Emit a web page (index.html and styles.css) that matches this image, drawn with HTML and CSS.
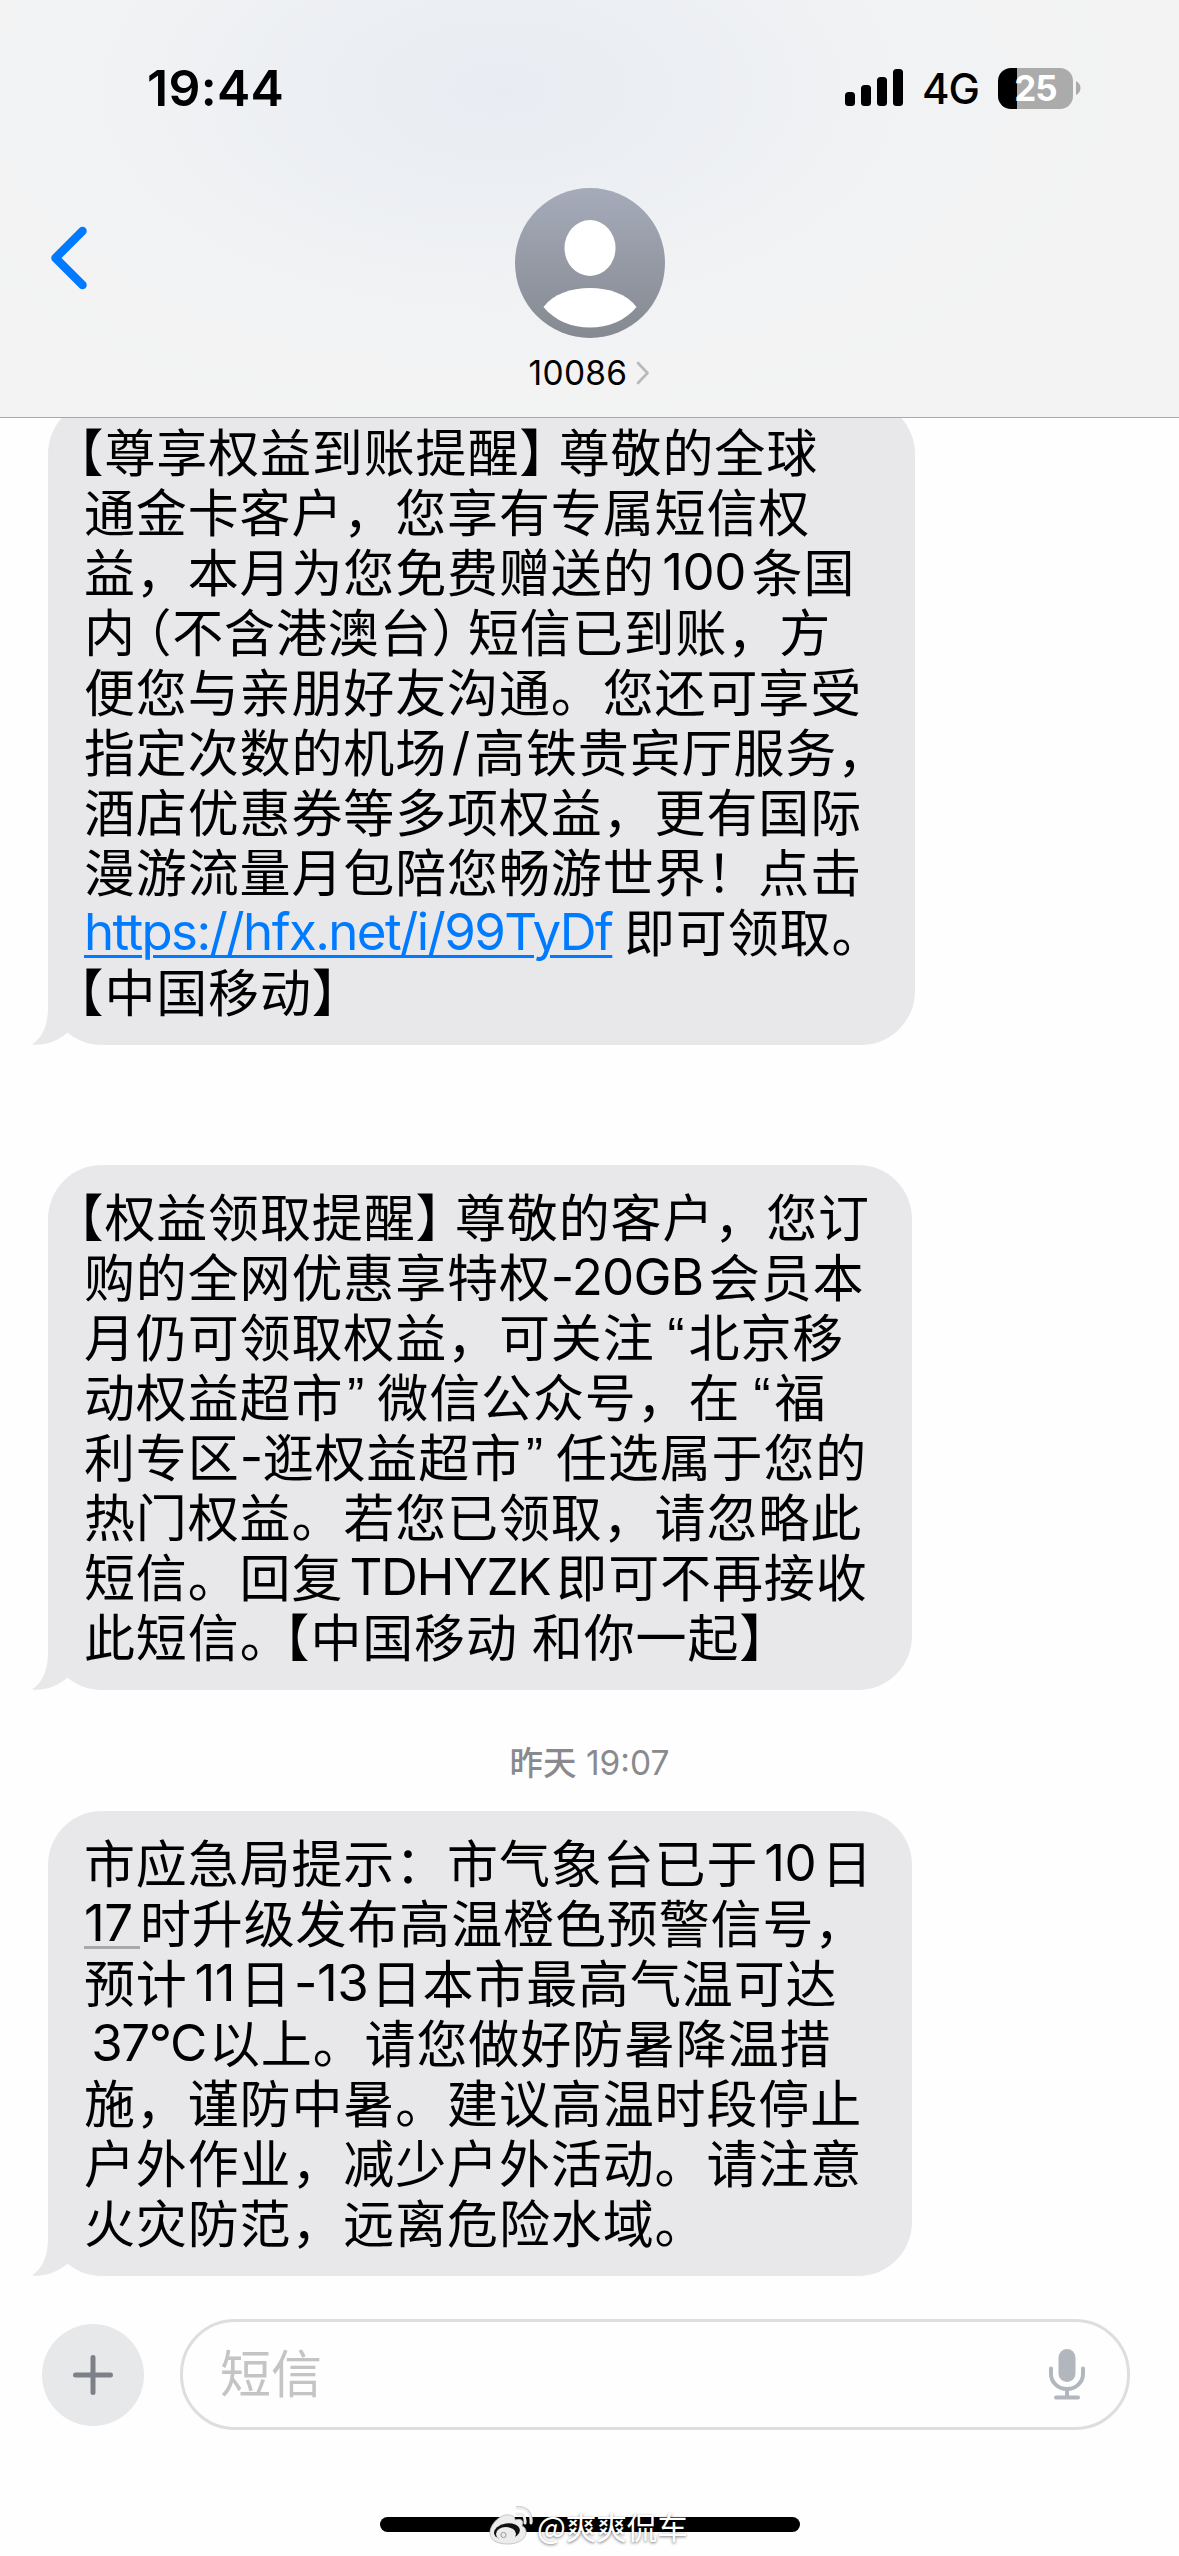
FILE: index.html
```
<!DOCTYPE html>
<html lang="zh-CN">
<head>
<meta charset="utf-8">
<title>10086</title>
<link rel="stylesheet" href="styles.css">
</head>
<body>
<div class="phone">
  <header class="header">
    <div class="status">
      <span class="time">19:44</span>
      <div class="status-right">
        <svg class="signal" width="58" height="38" viewBox="0 0 58 38"><rect x="0" y="23" width="10" height="14" rx="3.5"/><rect x="16" y="16" width="10" height="21" rx="3.5"/><rect x="32" y="8" width="10" height="29" rx="3.5"/><rect x="48" y="0" width="10" height="37" rx="3.5"/></svg>
        <span class="network">4G</span>
        <div class="battery"><span class="battery-body">25</span><svg width="5" height="14" viewBox="0 0 5 14"><path d="M0 0Q4.500 2.500 4.500 7T0 14z" fill="#ababab"/></svg></div>
      </div>
    </div>
    <div class="contact-bar">
      <svg class="back" width="38" height="64" viewBox="0 0 38 64"><path d="M33.500 5 6.500 32 33.500 59" fill="none" stroke="#007aff" stroke-width="8.500" stroke-linecap="round" stroke-linejoin="round"/></svg>
      <div class="contact">
        <svg class="avatar" width="150" height="150" viewBox="0 0 150 150">
          <defs><linearGradient id="av" x1="0" y1="0" x2="0" y2="1"><stop offset="0" stop-color="#a5abb9"/><stop offset="1" stop-color="#858991"/></linearGradient></defs>
          <circle cx="75" cy="75" r="75" fill="url(#av)"/>
          <ellipse cx="75" cy="60" rx="25.500" ry="28" fill="#fff"/>
          <path d="M28.500 119C38 106 56 100 75 100s37 6 46.500 19C110 133 93 139.500 75 139.500S40 133 28.500 119z" fill="#fff"/>
        </svg>
        <div class="name"><span>10086</span><svg width="14" height="24" viewBox="0 0 14 24"><path d="M2 2l9.500 10L2 22" fill="none" stroke="#b9b9bb" stroke-width="2.600" stroke-linecap="round" stroke-linejoin="round"/></svg></div>
      </div>
    </div>
  </header>

  <main class="thread">
    <section class="bubble first">
      <p><span class="open">【</span>尊享权益到账提醒<span class="close">】</span>尊敬的全球</p>
      <p>通金卡客户，您享有专属短信权</p>
      <p>益，本月为您免费赠送的<span class="run w100">100</span>条国</p>
      <p>内<span class="paren-open">（</span>不含港澳台<span class="paren-close">）</span>短信已到账，方</p>
      <p>便您与亲朋好友沟通。您还可享受</p>
      <p>指定次数的机场<span class="run slash">/</span>高铁贵宾厅服务，</p>
      <p>酒店优惠券等多项权益，更有国际</p>
      <p>漫游流量月包陪您畅游世界！点击</p>
      <p><a class="run link">https://hfx.net/i/99TyDf</a>即可领取。</p>
      <p><span class="open">【</span>中国移动<span class="close">】</span></p>
      <svg class="tail" width="60" height="60" viewBox="0 0 60 60"><path d="M16 0V22C16 40 11 52 0 59.500 14 61 27 55 35 48L60 30V0z"/></svg>
    </section>

    <section class="bubble second">
      <p><span class="open">【</span>权益领取提醒<span class="close">】</span>尊敬的客户，您订</p>
      <p>购的全网优惠享特权<span class="run plan">-20GB</span>会员本</p>
      <p>月仍可领取权益，可关注<span class="run quote-open">“</span>北京移</p>
      <p>动权益超市<span class="run quote-close">”</span>微信公众号，在<span class="run quote-open">“</span>福</p>
      <p>利专区<span class="run dash">-</span>逛权益超市<span class="run quote-close">”</span>任选属于您的</p>
      <p>热门权益。若您已领取，请忽略此</p>
      <p>短信。回复<span class="run code">TDHYZK</span>即可不再接收</p>
      <p>此短信<span class="stop">。</span><span class="open">【</span>中国移动<span class="gap"> </span>和你一起<span class="close">】</span></p>
      <svg class="tail" width="60" height="60" viewBox="0 0 60 60"><path d="M16 0V22C16 40 11 52 0 59.500 14 61 27 55 35 48L60 30V0z"/></svg>
    </section>

    <div class="stamp"><b>昨天</b> 19:07</div>

    <section class="bubble">
      <p>市应急局提示：市气象台已于<span class="run ten">10</span>日</p>
      <p><span class="run hour">17</span>时升级发布高温橙色预警信号，</p>
      <p>预计<span class="run eleven">11</span>日<span class="run thirteen">-13</span>日本市最高气温可达</p>
      <p><span class="run temp">37°C</span>以上。请您做好防暑降温措</p>
      <p>施，谨防中暑。建议高温时段停止</p>
      <p>户外作业，减少户外活动。请注意</p>
      <p>火灾防范，远离危险水域。</p>
      <svg class="tail" width="60" height="60" viewBox="0 0 60 60"><path d="M16 0V22C16 40 11 52 0 59.500 14 61 27 55 35 48L60 30V0z"/></svg>
    </section>
  </main>

  <footer class="composer">
    <div class="plus"><svg width="40" height="40" viewBox="0 0 40 40"><path d="M20 2.500v35M2.500 20h35" stroke="#7e8088" stroke-width="5" stroke-linecap="round"/></svg></div>
    <div class="field"><span>短信</span>
      <svg width="36" height="51" viewBox="0 0 36 51"><rect x="9.500" y="0" width="17" height="33" rx="8.500" fill="#b2b7be"/><path d="M2 19.500v5.500a16 15 0 0 0 32 0v-5.500M18 40v7M7 48.500h22" fill="none" stroke="#b2b7be" stroke-width="4" stroke-linecap="round"/></svg>
    </div>
  </footer>
  <div class="home"></div>
  <div class="watermark">
    <svg width="44" height="40" viewBox="0 0 44 40"><path d="M20 9C13 7 0 18 1 28c1 8 10 10 18 10 11 0 19-6 18-13-.5-4-4-5-4-5 2-5 0-8-7-6 0-3-1-4-6-5z" fill="#ececec" stroke="#bbb" stroke-width=".8"/><ellipse cx="18" cy="25.500" rx="13" ry="8" fill="#111" transform="rotate(-8 18 26)"/><ellipse cx="17" cy="28" rx="10" ry="7" fill="#ececec"/><circle cx="14.500" cy="29" r="2.600" fill="none" stroke="#999" stroke-width="1"/><path d="M28 8q9-1 8 9M28 2q15-1 14 15" fill="none" stroke="#ececec" stroke-width="3" stroke-linecap="round"/><path d="M27 .5Q43-1 43.500 16" fill="none" stroke="#bbb" stroke-width=".7"/></svg>
    <span class="at">@</span><span>爽爽侃车</span>
  </div>
</div>
</body>
</html>
```
FILE: styles.css
```
* { box-sizing: border-box; }

body {
  margin: 0;
  background: #fefefe;
  color: #000;
  font-family: Inter, "Noto Sans CJK SC", sans-serif;
}

.phone {
  position: relative;
  display: flex;
  flex-direction: column;
  width: 1179px;
  height: 2556px;
  overflow: hidden;
}

.header {
  height: 418px;
  flex: none;
  z-index: 1;
  border-bottom: 1.500px solid #a8a8aa;
  background:
    radial-gradient(ellipse 620px 340px at 500px 90px, #e8ecf2, rgba(240, 242, 244, .7) 65%, rgba(243, 243, 243, 0)),
    #f3f3f3;
}

.status {
  display: flex;
  justify-content: space-between;
  align-items: center;
  height: 176px;
  padding: 0 98px 0 147px;
}

.time {
  font-size: 50px;
  font-weight: 600;
  letter-spacing: .3px;
}

.status-right { display: flex; align-items: center; }

.network {
  margin-left: 19px;
  font-size: 42px;
  font-weight: 450;
  letter-spacing: -1px;
}

.battery { display: flex; align-items: center; gap: 3px; margin-left: 19px; }

.battery-body {
  width: 75px;
  height: 41px;
  border-radius: 13px;
  background: linear-gradient(90deg, #000 19px, #ababab 19px);
  color: #fff;
  font-size: 35px;
  font-weight: 650;
  line-height: 41px;
  text-align: center;
  letter-spacing: -1px;
}

.contact-bar {
  display: grid;
  grid-template-columns: 90px 1fr 90px;
  padding: 12px 0 0;
}

.back { margin: 38px 0 0 49px; }

.contact { display: flex; flex-direction: column; align-items: center; }

.avatar { display: block; }

.name {
  display: flex;
  align-items: center;
  gap: 9px;
  margin-top: 15px;
  font-size: 33.500px;
  line-height: 40px;
  letter-spacing: .3px;
}

.thread { height: 1878px; flex: none; margin-top: -18px; padding-left: 48px; }

.bubble {
  position: relative;
  isolation: isolate;
  width: 864px;
  padding: 20px 0 25px 36px;
  border-radius: 54px;
  background: #e8e8ea;
  font-size: 51px;
  letter-spacing: .87px;
  text-spacing-trim: space-all;
  font-family: "Noto Sans CJK SC", sans-serif;
}

.bubble.first { width: 867px; margin-bottom: 120px; }

.bubble p {
  height: 60px;
  margin: 0;
  line-height: 60px;
  white-space: nowrap;
}

.tail {
  position: absolute;
  z-index: -1;
  left: -16px;
  bottom: 0;
  fill: #e8e8ea;
}

/* half-width punctuation */
.open, .close, .paren-open, .paren-close, .stop { font-feature-settings: "halt" 1; }
.open { margin-left: -6px; }
.close { margin-right: 13px; }
.paren-open { margin-left: 10px; }
.paren-close { margin-right: 10px; }
.stop { margin-right: 24px; }

.run {
  display: inline-block;
  height: 60px;
  padding-top: 2px;
  vertical-align: top;
  font-family: Inter, sans-serif;
  text-align: center;
  letter-spacing: -.5px;
}

.w100 { width: 97px; padding-left: 2px; }
.slash { width: 27px; }
.link {
  width: 528px;
  margin-right: 12px;
  color: #007aff;
  text-decoration: underline;
  text-decoration-thickness: 3px;
  text-underline-offset: 5px;
  text-align: left;
  letter-spacing: -1.600px;
}
.plan { width: 158px; padding-right: 6px; letter-spacing: -.8px; }
.quote-open,
.quote-close {
  width: 34px;
  font-family: "Liberation Sans", sans-serif;
  letter-spacing: 0;
}
.quote-open { padding-right: 4px; text-align: right; }
.quote-close { padding-left: 4px; text-align: left; }
.dash { width: 23px; }
.code { width: 213px; letter-spacing: -1.300px; }
.gap { display: inline-block; width: 14px; }
.ten { width: 63px; padding-left: 1px; }
.hour {
  width: 56px;
  height: 58px;
  border-bottom: 3px solid #a9a9ab;
  text-align: left;
}
.eleven { width: 52px; padding-left: 2px; }
.thirteen { width: 79px; }
.temp { width: 125px; padding-left: 4px; letter-spacing: -1.500px; }

.stamp {
  height: 121px;
  margin-left: -48px;
  color: #8a8a8e;
  font-size: 33.500px;
  line-height: 147px;
  text-align: center;
}
.stamp b { font-weight: 500; }

.composer {
  display: flex;
  align-items: center;
  gap: 36px;
  margin-top: 41px;
  padding: 0 49px 0 42px;
}

.plus {
  display: grid;
  place-items: center;
  width: 102px;
  height: 102px;
  border-radius: 50%;
  background: #e7e8ea;
}

.field {
  display: flex;
  flex: 1;
  align-items: center;
  justify-content: space-between;
  height: 111px;
  padding: 0 42px 0 37px;
  border: 3px solid #dedede;
  border-radius: 55px;
  color: #c4c4c6;
  font-size: 51px;
  line-height: 62px;
}

.home {
  width: 420px;
  height: 15px;
  margin: 87px auto 0;
  border-radius: 8px;
  background: #000;
}

.watermark {
  position: absolute;
  left: 489px;
  top: 2506px;
  display: flex;
  align-items: center;
  color: #fff;
  font-family: "Noto Sans CJK SC", sans-serif;
  font-size: 30.500px;
  line-height: 40px;
  text-shadow: 0 1px 3px rgba(0, 0, 0, .55);
}
.at { margin-left: 4px; }
```
